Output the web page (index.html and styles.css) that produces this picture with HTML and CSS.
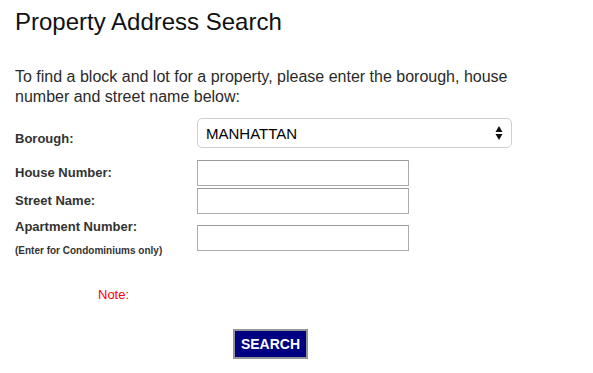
FILE: index.html
```html
<!DOCTYPE html>
<html lang="en">
<head>
<meta charset="utf-8">
<title>Property Address Search</title>
<link rel="stylesheet" href="styles.css">
</head>
<body>
<div class="page">
  <h1 class="title">Property Address Search</h1>
  <p class="intro">To find a block and lot for a property, please enter the borough, house number and street name below:</p>
  <form class="search-form">
    <div class="row row-borough">
      <label class="label label-borough" for="borough">Borough:</label>
      <div class="select-wrap">
        <select id="borough" class="select">
          <option>MANHATTAN</option>
          <option>BRONX</option>
          <option>BROOKLYN</option>
          <option>QUEENS</option>
          <option>STATEN ISLAND</option>
        </select>
        <svg class="select-arrows" width="8" height="16" viewBox="0 0 8 16" aria-hidden="true">
          <polygon points="4,1 7.5,7 0.5,7" fill="#111"/>
          <polygon points="0.5,9 7.5,9 4,15" fill="#111"/>
        </svg>
      </div>
    </div>
    <div class="row row-house">
      <label class="label label-input" for="house">House Number:</label>
      <input id="house" class="text-input" type="text">
    </div>
    <div class="row row-street">
      <label class="label label-input" for="street">Street Name:</label>
      <input id="street" class="text-input" type="text">
    </div>
    <div class="row row-apt">
      <div class="label-group">
        <label class="label" for="apt">Apartment Number:</label>
        <span class="sublabel">(Enter for Condominiums only)</span>
      </div>
      <input id="apt" class="text-input apt-input" type="text">
    </div>
    <div class="note">Note:</div>
    <button type="button" class="search-btn">SEARCH</button>
  </form>
</div>
</body>
</html>
```

FILE: styles.css
```css
html, body {
  margin: 0;
  padding: 0;
  background: #ffffff;
}

body {
  font-family: "Liberation Sans", Arial, sans-serif;
  color: #333333;
}

.page {
  padding-left: 15px;
}

.title {
  margin: 8px 0 0 0;
  font-size: 24px;
  line-height: 28px;
  font-weight: normal;
  color: #111111;
}

.intro {
  margin: 31px 0 0 0;
  width: 530px;
  font-size: 16px;
  line-height: 20px;
  color: #2a2a2a;
}

.search-form {
  display: flex;
  flex-direction: column;
  align-items: flex-start;
}

.row {
  display: flex;
  align-items: flex-start;
}

.label {
  display: block;
  width: 182px;
  font-size: 13px;
  line-height: 16px;
  font-weight: bold;
  color: #333333;
}

.row-borough {
  margin-top: 11px;
}

.label-borough {
  padding-top: 13px;
}

.select-wrap {
  position: relative;
  width: 315px;
  height: 30px;
}

.select {
  -webkit-appearance: none;
  appearance: none;
  box-sizing: border-box;
  width: 315px;
  height: 30px;
  margin: 0;
  padding: 0 0 0 8px;
  border: 1px solid #cfcfcf;
  border-radius: 5px;
  background: #ffffff;
  font-family: "Liberation Sans", Arial, sans-serif;
  font-size: 15px;
  color: #000000;
}

.select-arrows {
  position: absolute;
  right: 9px;
  top: 7px;
  pointer-events: none;
}

.row-house {
  margin-top: 12px;
}

.row-street {
  margin-top: 2px;
}

.label-input {
  padding-top: 5px;
}

.text-input {
  box-sizing: border-box;
  width: 212px;
  height: 26px;
  margin: 0;
  padding: 2px 4px;
  border: 1px solid #ababab;
  border-top-color: #9a9a9a;
  background: #ffffff;
  font-family: "Liberation Sans", Arial, sans-serif;
  font-size: 13px;
}

.row-apt {
  margin-top: 5px;
}

.label-group {
  display: flex;
  flex-direction: column;
  width: 182px;
}

.sublabel {
  margin-top: 9px;
  font-size: 10px;
  line-height: 13px;
  font-weight: bold;
  color: #333333;
}

.apt-input {
  margin-top: 6px;
}

.note {
  margin: 30px 0 0 83px;
  font-size: 13px;
  line-height: 16px;
  color: #ff0000;
}

.search-btn {
  box-sizing: border-box;
  width: 75px;
  height: 30px;
  margin: 26px 0 0 218px;
  padding: 0;
  border: 2px solid #949494;
  background: #000080;
  color: #ffffff;
  font-family: "Liberation Sans", Arial, sans-serif;
  font-size: 14px;
  font-weight: bold;
  letter-spacing: 0;
}
```
